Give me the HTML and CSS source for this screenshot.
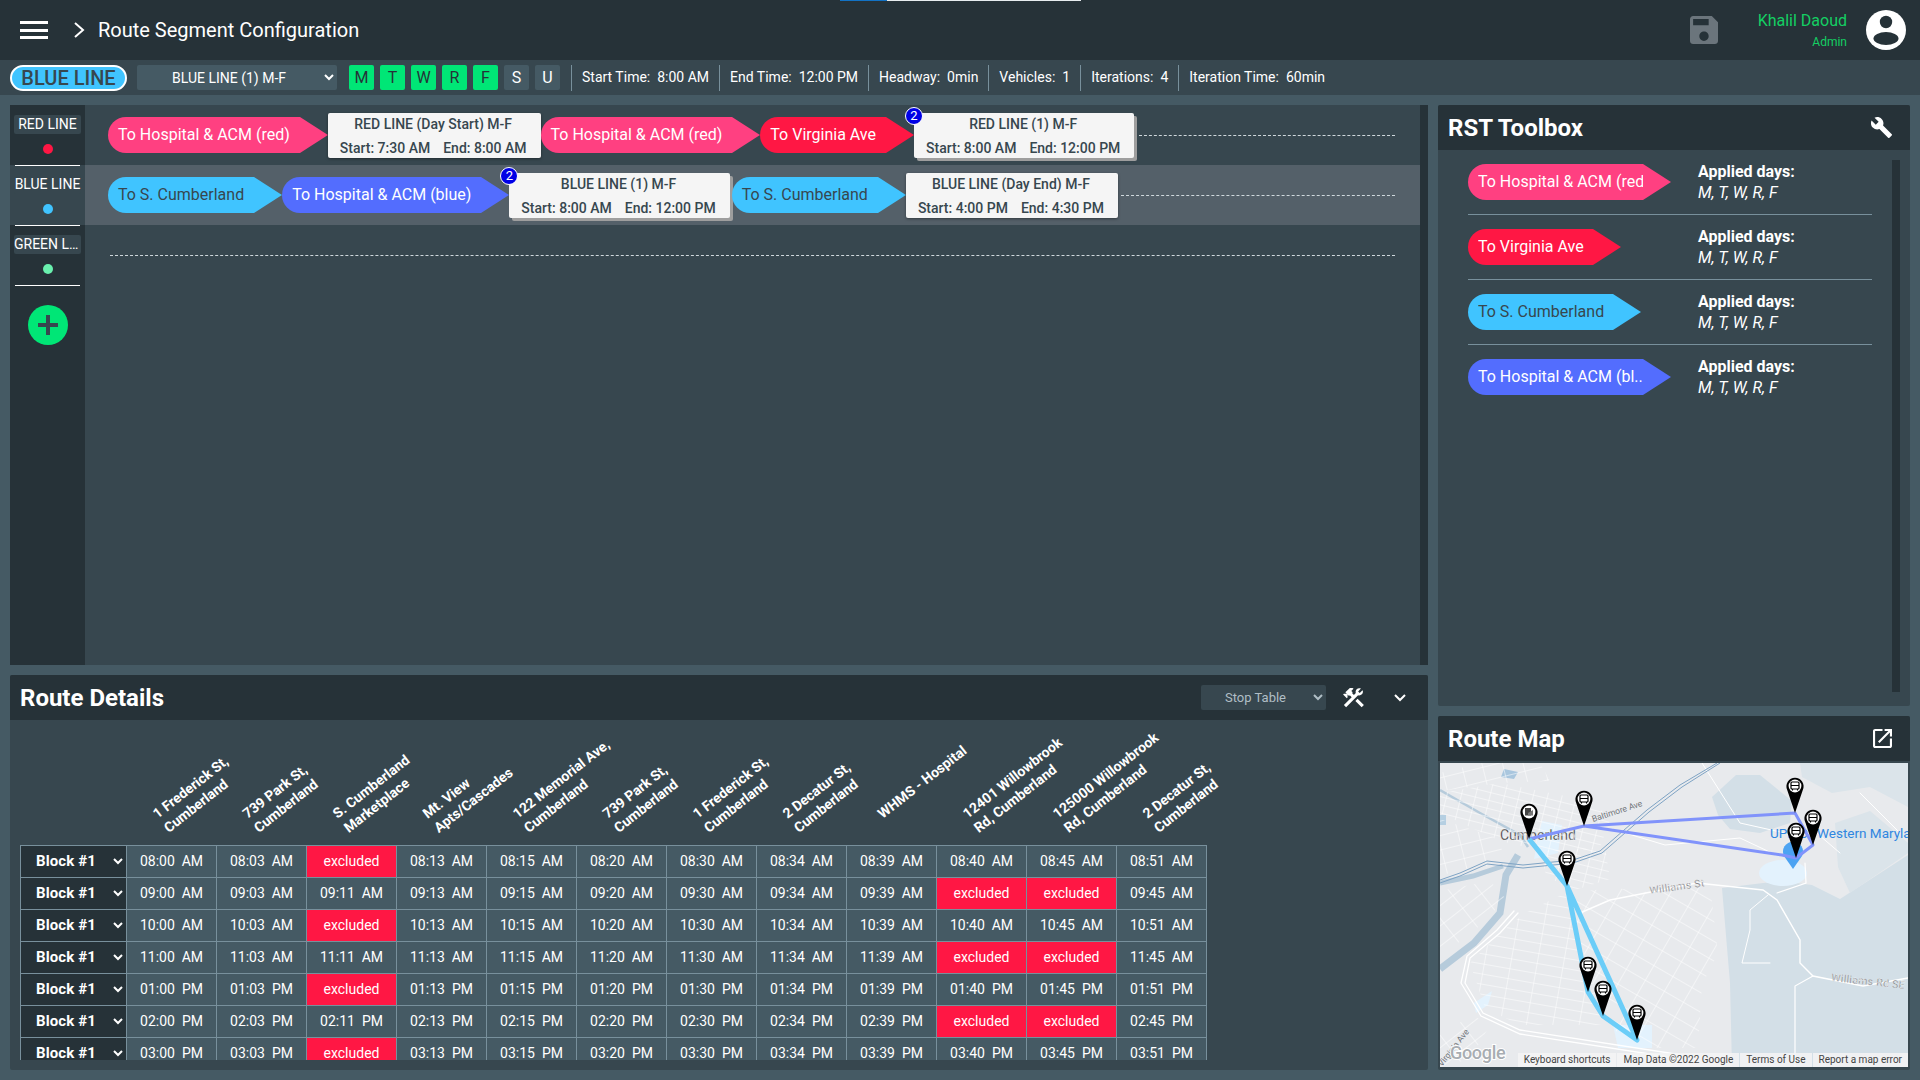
FILE: index.html
```html
<!DOCTYPE html>
<html lang="en">
<head>
<meta charset="UTF-8" />
<meta name="viewport" content="width=device-width, initial-scale=1" />
<title>Route Segment Configuration</title>
<link rel="stylesheet" href="styles.css">
</head>
<body>

<header class="topbar">
  <div class="progress"><span class="progressDone"></span><span class="progressRest"></span></div>
  <div class="burger"><span></span><span></span><span></span></div>
  <svg class="crumbIcon" viewBox="0 0 12 16"><path d="M2 1l8 7-8 7" fill="none" stroke="#fff" stroke-width="2"/></svg>
  <h1 class="pageTitle">Route Segment Configuration</h1>
  <svg class="saveIcon" viewBox="3 3 18 18"><path fill="#6b757c" d="M17 3H5c-1.11 0-2 .9-2 2v14c0 1.1.89 2 2 2h14c1.1 0 2-.9 2-2V7l-4-4zm-5 16c-1.66 0-3-1.34-3-3s1.34-3 3-3 3 1.34 3 3-1.34 3-3 3zm3-10H5V5h10v4z"/></svg>
  <div class="user">
    <div class="userName">Khalil Daoud</div>
    <div class="userRole">Admin</div>
  </div>
  <svg class="avatar" viewBox="0 0 40 40">
    <circle cx="20" cy="20" r="20" fill="#fff"/>
    <circle cx="20" cy="12" r="6.2" fill="#263238"/>
    <ellipse cx="20" cy="28.5" rx="12.5" ry="6.5" fill="#263238"/>
  </svg>
</header>

<div class="subbar">
  <div class="linePill">BLUE LINE</div>
  <select class="darkSelect scheduleSelect"><option>BLUE LINE (1) M-F</option></select>
  <div class="days">
    <span class="day on">M</span><span class="day on">T</span><span class="day on">W</span><span class="day on">R</span><span class="day on">F</span><span class="day">S</span><span class="day">U</span>
  </div>
  <div class="stat">Start Time:<b>8:00 AM</b></div>
  <div class="stat">End Time:<b>12:00 PM</b></div>
  <div class="stat">Headway:<b>0min</b></div>
  <div class="stat">Vehicles:<b>1</b></div>
  <div class="stat">Iterations:<b>4</b></div>
  <div class="stat">Iteration Time:<b>60min</b></div>
</div>

<main class="content">
  <div class="leftCol">

    <section class="board">
      <aside class="lineList">
        <div class="lineItem">
          <div class="lineName">RED LINE</div>
          <span class="lineDot dotRed"></span>
        </div>
        <div class="lineItem lineItemActive">
          <div class="lineName">BLUE LINE</div>
          <span class="lineDot dotBlue"></span>
        </div>
        <div class="lineItem">
          <div class="lineName">GREEN LINE</div>
          <span class="lineDot dotGreen"></span>
        </div>
        <div class="addLine"><span class="addLineH"></span><span class="addLineV"></span></div>
      </aside>

      <div class="tracks">
        <div class="track">
          <div class="chip pink"><span class="chipText">To Hospital &amp; ACM (red)</span></div>
          <div class="card">
            <div class="cardTitle">RED LINE (Day Start) M-F</div>
            <div class="cardTimes"><span>Start: 7:30 AM</span><span>End: 8:00 AM</span></div>
          </div>
          <div class="chip pink"><span class="chipText">To Hospital &amp; ACM (red)</span></div>
          <div class="chip red"><span class="chipText">To Virginia Ave</span></div>
          <div class="card cardStacked">
            <span class="badge">2</span>
            <div class="cardTitle">RED LINE (1) M-F</div>
            <div class="cardTimes"><span>Start: 8:00 AM</span><span>End: 12:00 PM</span></div>
          </div>
          <div class="dashLine"></div>
        </div>

        <div class="track trackActive">
          <div class="chip sky"><span class="chipText">To S. Cumberland</span></div>
          <div class="chip indigo"><span class="chipText">To Hospital &amp; ACM (blue)</span></div>
          <div class="card cardStacked">
            <span class="badge">2</span>
            <div class="cardTitle">BLUE LINE (1) M-F</div>
            <div class="cardTimes"><span>Start: 8:00 AM</span><span>End: 12:00 PM</span></div>
          </div>
          <div class="chip sky"><span class="chipText">To S. Cumberland</span></div>
          <div class="card">
            <div class="cardTitle">BLUE LINE (Day End) M-F</div>
            <div class="cardTimes"><span>Start: 4:00 PM</span><span>End: 4:30 PM</span></div>
          </div>
          <div class="dashLine"></div>
        </div>

        <div class="track trackEmpty">
          <div class="dashLine"></div>
        </div>
      </div>
      <div class="scrollTrack"></div>
    </section>

    <section class="panel details">
      <div class="panelHead">
        <h2 class="panelTitle">Route Details</h2>
        <select class="darkSelect viewSelect"><option>Stop Table</option></select>
        <svg class="toolsIcon" viewBox="2 3 20 19"><path fill="#fff" d="M13.78 15.3L19.78 21.3L21.89 19.14L15.89 13.14L13.78 15.3M17.5 10.1C17.11 10.1 16.69 10.05 16.36 9.91L4.97 21.25L2.86 19.14L10.27 11.74L8.5 9.96L7.78 10.66L6.33 9.25V12.11L5.63 12.81L2.11 9.25L2.81 8.55H5.62L4.22 7.14L7.78 3.58C8.95 2.41 10.83 2.41 12 3.58L9.89 5.74L11.3 7.14L10.59 7.85L12.38 9.63L14.2 7.75C14.06 7.42 14 7 14 6.63C14 4.66 15.55 3.11 17.5 3.11C18.09 3.11 18.61 3.25 19.08 3.53L16.41 6.2L17.91 7.7L20.58 5.03C20.86 5.5 21 6 21 6.63C21 8.55 19.45 10.1 17.5 10.1Z"/></svg>
        <svg class="collapseIcon" viewBox="0 0 12 8"><path d="M1 1l5 5 5-5" fill="none" stroke="#fff" stroke-width="2"/></svg>
      </div>
      <div class="tableWrap">
        <table class="stopTable">
          <thead>
            <tr>
              <th class="blockCol"></th>
              <th><span class="stopName">1 Frederick St,<br>Cumberland</span></th>
              <th><span class="stopName">739 Park St,<br>Cumberland</span></th>
              <th><span class="stopName">S. Cumberland<br>Marketplace</span></th>
              <th><span class="stopName">Mt. View<br>Apts/Cascades</span></th>
              <th><span class="stopName">122 Memorial Ave,<br>Cumberland</span></th>
              <th><span class="stopName">739 Park St,<br>Cumberland</span></th>
              <th><span class="stopName">1 Frederick St,<br>Cumberland</span></th>
              <th><span class="stopName">2 Decatur St,<br>Cumberland</span></th>
              <th><span class="stopName stopNameOne">WHMS - Hospital</span></th>
              <th><span class="stopName">12401 Willowbrook<br>Rd, Cumberland</span></th>
              <th><span class="stopName">125000 Willowbrook<br>Rd, Cumberland</span></th>
              <th><span class="stopName">2 Decatur St,<br>Cumberland</span></th>
            </tr>
          </thead>
          <tbody>
            <tr>
              <td class="blockCell"><select class="blockSelect"><option>Block #1</option></select></td>
              <td>08:00 AM</td><td>08:03 AM</td><td class="excluded">excluded</td><td>08:13 AM</td><td>08:15 AM</td><td>08:20 AM</td><td>08:30 AM</td><td>08:34 AM</td><td>08:39 AM</td><td>08:40 AM</td><td>08:45 AM</td><td>08:51 AM</td>
            </tr>
            <tr>
              <td class="blockCell"><select class="blockSelect"><option>Block #1</option></select></td>
              <td>09:00 AM</td><td>09:03 AM</td><td>09:11 AM</td><td>09:13 AM</td><td>09:15 AM</td><td>09:20 AM</td><td>09:30 AM</td><td>09:34 AM</td><td>09:39 AM</td><td class="excluded">excluded</td><td class="excluded">excluded</td><td>09:45 AM</td>
            </tr>
            <tr>
              <td class="blockCell"><select class="blockSelect"><option>Block #1</option></select></td>
              <td>10:00 AM</td><td>10:03 AM</td><td class="excluded">excluded</td><td>10:13 AM</td><td>10:15 AM</td><td>10:20 AM</td><td>10:30 AM</td><td>10:34 AM</td><td>10:39 AM</td><td>10:40 AM</td><td>10:45 AM</td><td>10:51 AM</td>
            </tr>
            <tr>
              <td class="blockCell"><select class="blockSelect"><option>Block #1</option></select></td>
              <td>11:00 AM</td><td>11:03 AM</td><td>11:11 AM</td><td>11:13 AM</td><td>11:15 AM</td><td>11:20 AM</td><td>11:30 AM</td><td>11:34 AM</td><td>11:39 AM</td><td class="excluded">excluded</td><td class="excluded">excluded</td><td>11:45 AM</td>
            </tr>
            <tr>
              <td class="blockCell"><select class="blockSelect"><option>Block #1</option></select></td>
              <td>01:00 PM</td><td>01:03 PM</td><td class="excluded">excluded</td><td>01:13 PM</td><td>01:15 PM</td><td>01:20 PM</td><td>01:30 PM</td><td>01:34 PM</td><td>01:39 PM</td><td>01:40 PM</td><td>01:45 PM</td><td>01:51 PM</td>
            </tr>
            <tr>
              <td class="blockCell"><select class="blockSelect"><option>Block #1</option></select></td>
              <td>02:00 PM</td><td>02:03 PM</td><td>02:11 PM</td><td>02:13 PM</td><td>02:15 PM</td><td>02:20 PM</td><td>02:30 PM</td><td>02:34 PM</td><td>02:39 PM</td><td class="excluded">excluded</td><td class="excluded">excluded</td><td>02:45 PM</td>
            </tr>
            <tr>
              <td class="blockCell"><select class="blockSelect"><option>Block #1</option></select></td>
              <td>03:00 PM</td><td>03:03 PM</td><td class="excluded">excluded</td><td>03:13 PM</td><td>03:15 PM</td><td>03:20 PM</td><td>03:30 PM</td><td>03:34 PM</td><td>03:39 PM</td><td>03:40 PM</td><td>03:45 PM</td><td>03:51 PM</td>
            </tr>
          </tbody>
        </table>
      </div>
    </section>
  </div>

  <div class="rightCol">
    <section class="panel toolbox">
      <div class="panelHead">
        <h2 class="panelTitle">RST Toolbox</h2>
        <svg class="panelIcon wrench" viewBox="1 1 23 23"><path fill="#fff" d="M22.7 19l-9.1-9.1c.9-2.3.4-5-1.5-6.9-2-2-5-2.4-7.4-1.3L9 6 6 9 1.6 4.7C.4 7.1.9 10.1 2.9 12.1c1.9 1.9 4.6 2.4 6.9 1.5l9.1 9.1c.4.4 1 .4 1.4 0l2.3-2.3c.5-.4.5-1.1.1-1.4z"/></svg>
      </div>
      <div class="toolBody">
        <div class="toolList">
          <div class="toolRow">
            <div class="chip pink toolChip wide"><span class="chipText">To Hospital &amp; ACM (red)</span></div>
            <div class="applied"><b>Applied days:</b><i>M, T, W, R, F</i></div>
          </div>
          <div class="toolRow">
            <div class="chip red toolChip short"><span class="chipText">To Virginia Ave</span></div>
            <div class="applied"><b>Applied days:</b><i>M, T, W, R, F</i></div>
          </div>
          <div class="toolRow">
            <div class="chip sky toolChip mid"><span class="chipText">To S. Cumberland</span></div>
            <div class="applied"><b>Applied days:</b><i>M, T, W, R, F</i></div>
          </div>
          <div class="toolRow toolRowLast">
            <div class="chip indigo toolChip wide"><span class="chipText">To Hospital &amp; ACM (bl..</span></div>
            <div class="applied"><b>Applied days:</b><i>M, T, W, R, F</i></div>
          </div>
        </div>
        <div class="toolScroll"></div>
      </div>
    </section>

    <section class="panel routeMap">
      <div class="panelHead mapHead">
        <h2 class="panelTitle">Route Map</h2>
        <svg class="panelIcon openIcon" viewBox="3 3 18 18"><path fill="#fff" d="M19 19H5V5h7V3H5c-1.11 0-2 .9-2 2v14c0 1.1.89 2 2 2h14c1.1 0 2-.9 2-2v-7h-2v7zM14 3v2h3.59l-9.83 9.83 1.41 1.41L19 6.41V10h2V3h-7z"/></svg>
      </div>
      <div class="mapBox">
        <svg class="mapSvg" viewBox="0 0 468 304">
          <defs>
            <pattern id="streetsDense" width="14" height="8" patternUnits="userSpaceOnUse" patternTransform="rotate(14)">
              <path d="M0 0H14M0 0V8" stroke="#fff" stroke-width="1" fill="none"/>
            </pattern>
            <pattern id="streetsWest" width="20" height="14" patternUnits="userSpaceOnUse" patternTransform="rotate(-14)">
              <path d="M0 0H20M0 0V14" stroke="#fff" stroke-width="1" fill="none"/>
            </pattern>
            <pattern id="streetsSouth" width="26" height="10" patternUnits="userSpaceOnUse" patternTransform="rotate(10)">
              <path d="M0 0H26M0 0V10" stroke="#fff" stroke-width="1" fill="none"/>
            </pattern>
            <pattern id="streetsEast" width="22" height="17" patternUnits="userSpaceOnUse" patternTransform="rotate(30)">
              <path d="M0 0H22M0 0V17" stroke="#fff" stroke-width="1" fill="none"/>
            </pattern>
            <pattern id="streetsRiver" width="24" height="16" patternUnits="userSpaceOnUse" patternTransform="rotate(-38)">
              <path d="M0 0H24M0 0V16" stroke="#fff" stroke-width="1" fill="none"/>
            </pattern>
            <g id="pinBody">
              <path d="M0 0L-7.8 -23A8.6 8.6 0 1 1 7.8 -23Z" fill="#000"/>
              <circle cx="0" cy="-27" r="6.4" fill="#fff"/>
            </g>
            <g id="pin">
              <use href="#pinBody"/>
              <rect x="-4" y="-31" width="8" height="7" rx="1" fill="none" stroke="#000" stroke-width="1.2"/>
              <path d="M-4 -27.5H4M-2.5 -24V-22.5M2.5 -24V-22.5" stroke="#000" stroke-width="1.1"/>
            </g>
            <g id="pinAlt">
              <use href="#pinBody"/>
              <rect x="-4" y="-31" width="6" height="7.5" fill="#444"/>
              <path d="M-1 -26L4 -29V-23.5H-1Z" fill="#777"/>
            </g>
          </defs>

          <rect width="468" height="304" fill="#e8eaed"/>

          <!-- terrain -->
          <path fill="#d3dfe7" d="M282 125L340 118L372 122L400 136L468 92V304H292L290 220Z"/>
          <path fill="#d3dfe7" d="M272 34L296 12L320 12L352 38L350 60L320 70L290 66L278 52Z"/>
          <path fill="#dbe4ea" d="M360 0H468V44L430 24L392 30L362 14Z"/>
          <path fill="#dbe4ea" d="M395 60L430 48L468 80V90L410 130L398 104Z"/>

          <!-- water -->
          <path fill="none" stroke="#b6cbdb" stroke-width="7" d="M0 206L34 180L60 150L66 112L78 92"/>
          <path fill="none" stroke="#b6cbdb" stroke-width="2.5" d="M0 27L40 50L80 72L88 84"/>
          <path fill="none" stroke="#b6cbdb" stroke-width="5" d="M0 120L33 113L63 103"/>
          <path fill="#a9c6de" d="M64 6L78 9L74 16L61 14Z"/>
          <rect x="0" y="52" width="6" height="10" fill="#b5cfe2"/>
          <ellipse cx="343" cy="110" rx="24" ry="13" fill="#e3f2fd"/>
          <path fill="#e3f2fd" d="M173 262H212V285H178Z"/>
          <path fill="#e3f2fd" d="M102 58L122 62L118 90L94 96L98 74Z"/>
          <path fill="#e3f2fd" d="M34 240L52 228L48 242L36 250Z"/>

          <!-- streets -->
          <path fill="url(#streetsWest)" d="M0 10L40 0H100L110 18L60 20L0 28Z"/>
          <path fill="url(#streetsDense)" d="M0 30L60 20L130 34L172 52L160 84L120 92L60 78L0 50Z"/>
          <path fill="url(#streetsDense)" d="M100 88L165 84L170 116L132 128L106 112Z"/>
          <path fill="url(#streetsWest)" d="M0 56L60 76L64 100L0 112Z"/>
          <path fill="url(#streetsSouth)" d="M30 200L60 170L85 150L125 130L150 210L165 262L80 262L45 245Z"/>
          <path fill="url(#streetsEast)" d="M125 130L175 125L215 130L270 122L278 190L262 222L258 285L205 285L165 262L150 210Z"/>
          <path fill="url(#streetsRiver)" d="M0 128L50 118L66 136L30 172L0 192Z"/>
          <path fill="url(#streetsRiver)" d="M0 272L32 252L50 262L30 296L0 304Z"/>

          <!-- main roads -->
          <g fill="none" stroke="#fff" stroke-linecap="round">
            <path stroke-width="1.3" d="M242 292L80 267L43 250L25 220L30 195L60 170L78 150"/>
            <path stroke-width="1.3" d="M242 296L80 271L41 253L21 220L27 193L57 167L74 148"/>
            <path stroke-width="1.4" d="M140 150L170 137L257 120L323 127L337 137L360 177L360 200L373 213L423 223L468 215"/>
            <path stroke-width="1.2" d="M373 213L355 223L355 304"/>
            <path stroke-width="1.2" d="M337 130L366 120L365 100"/>
            <path stroke-width="1" d="M328 132L310 147L310 167L302 200H330"/>
            <path stroke-width="1" d="M172 66L225 82L300 75L336 92"/>
            <path stroke-width="1" d="M262 0L300 60L345 70M365 60L400 90M420 30L460 70"/>
          </g>

          <!-- rail -->
          <path fill="none" stroke="#7ea3c4" stroke-width="1" d="M0 117L20 110L47 98L83 102L133 97L160 88L207 47L240 22L277 0"/>
          <path fill="none" stroke="#7ea3c4" stroke-width="1" d="M0 120L20 113L47 101L83 105L133 100L162 90L209 49L242 24L280 0"/>

          <text class="mapLabel" x="60" y="77">Cumberland</text>
          <text class="poiLabel" y="75"><tspan x="330">UPMC</tspan><tspan x="377">Western Maryland</tspan></text>
          <text class="roadLabel" transform="translate(210 131) rotate(-8)">Williams St</text>
          <text class="roadLabel" transform="translate(391 218) rotate(6)">Williams Rd SE</text>
          <text class="roadLabelSmall" transform="translate(153 59) rotate(-18)">Baltimore Ave</text>
          <text class="roadLabelSmall" transform="translate(2 304) rotate(-52)">Virginia Ave</text>

          <!-- poi marker -->
          <path fill="#4ca3f2" d="M353 106L344 93A10 10 0 1 1 362 93Z"/>

          <!-- routes -->
          <path fill="none" stroke="#8093fb" stroke-width="3" stroke-linejoin="round" d="M89 76L144 63L355 50L373 82L356 95L342 92L144 63"/>
          <path fill="none" stroke="#6bcdf8" stroke-width="5" stroke-linejoin="round" d="M89 76L127 123L148 229L163 253L197 277L127 123"/>

          <use href="#pinAlt" x="89" y="76"/>
          <use href="#pin" x="144" y="63"/>
          <use href="#pin" x="355" y="50"/>
          <use href="#pin" x="373" y="82"/>
          <use href="#pin" x="356" y="95"/>
          <use href="#pin" x="127" y="123"/>
          <use href="#pin" x="148" y="229"/>
          <use href="#pin" x="163" y="253"/>
          <use href="#pin" x="197" y="277"/>

          <text class="googleMark" x="10" y="296">Google</text>
        </svg>
        <div class="mapCredits">
          <span>Keyboard shortcuts</span>
          <span>Map Data ©2022 Google</span>
          <span>Terms of Use</span>
          <span>Report a map error</span>
        </div>
      </div>
    </section>
  </div>
</main>

</body>
</html>
```

FILE: styles.css
```css
* { box-sizing: border-box; }

html, body { height: 100%; }

body {
  margin: 0;
  height: 100vh;
  overflow: hidden;
  display: flex;
  flex-direction: column;
  font-family: Roboto, "Liberation Sans", sans-serif;
  font-size: 14px;
  color: #fff;
  background: #455a64;
}

/* top bar */
.topbar {
  position: relative;
  height: 60px;
  flex: none;
  display: flex;
  align-items: center;
  padding: 0 14px 0 20px;
  background: #263238;
}
.progress {
  position: absolute;
  top: 0;
  left: 840px;
  display: flex;
  height: 1px;
}
.progressDone { width: 47px; background: #1272c4; }
.progressRest { width: 194px; background: #e8edf0; }

.burger { width: 28px; display: flex; flex-direction: column; gap: 4.5px; }
.burger span { height: 3px; background: #fff; }

.crumbIcon { width: 12px; height: 16px; margin-left: 25px; }
.pageTitle { margin: 0 auto 0 13px; font-size: 20px; font-weight: 400; }

.saveIcon { width: 28px; height: 28px; }
.user { width: 129px; padding-bottom: 1px; text-align: right; color: #14cf63; }
.userName { font-size: 16px; line-height: 20px; }
.userRole { font-size: 12px; line-height: 14px; margin-top: 4px; }
.avatar { width: 40px; height: 40px; margin-left: 19px; }

/* sub bar */
.subbar {
  height: 35px;
  flex: none;
  display: flex;
  align-items: flex-start;
  padding: 5px 0 0 10px;
  background: #37474f;
}
.linePill {
  width: 117px;
  height: 26px;
  border: 2px solid #fff;
  border-radius: 13px;
  background: #40c4ff;
  color: #37474f;
  font-size: 20px;
  font-weight: 500;
  line-height: 23px;
  text-align: center;
}
.darkSelect {
  height: 25px;
  border: 0;
  border-radius: 2px;
  font-family: inherit;
  font-size: 14px;
}
.scheduleSelect {
  width: 200px;
  margin-left: 10px;
  padding-left: 31px;
  background: #455a64;
  color: #fff;
}
.days { display: flex; gap: 6px; margin-left: 12px; padding-right: 11px; border-right: 1px solid #78909c; height: 26px; }
.day {
  width: 25px;
  height: 25px;
  border-radius: 2px;
  background: #455a64;
  font-size: 16px;
  line-height: 25px;
  text-align: center;
}
.day.on { background: #00e676; color: #263238; }
.stat {
  height: 26px;
  padding: 0 10px;
  border-right: 1px solid #78909c;
  line-height: 25px;
}
.stat:last-child { border-right: 0; }
.stat b { margin-left: 7px; font-weight: 400; }

/* page columns */
.content {
  flex: 1;
  min-height: 0;
  display: flex;
  gap: 10px;
  padding: 10px;
}
.leftCol { width: 1418px; display: flex; flex-direction: column; gap: 10px; }
.rightCol { width: 472px; display: flex; flex-direction: column; gap: 10px; }

/* route board */
.board { height: 560px; flex: none; display: flex; background: #37474f; }

.lineList { width: 75px; flex: none; background: #263238; }
.lineItem {
  height: 60px;
  margin: 0;
  padding: 10px 4px 0;
  display: flex;
  flex-direction: column;
  align-items: center;
  position: relative;
}
.lineItem::after {
  content: "";
  position: absolute;
  z-index: 1;
  left: 5px;
  right: 5px;
  bottom: -1px;
  height: 1px;
  background: #fff;
}
.lineItemActive { background: #37474f; }
.lineName {
  width: 67px;
  height: 19px;
  border-radius: 2px;
  background: #37474f;
  font-size: 14px;
  line-height: 19px;
  text-align: center;
  white-space: nowrap;
  overflow: hidden;
  text-overflow: ellipsis;
}
.lineDot { width: 10px; height: 10px; margin-top: 10px; border-radius: 50%; }
.dotRed { background: #ff1744; }
.dotBlue { background: #40c4ff; }
.dotGreen { background: #69f0ae; }

.addLine {
  position: relative;
  width: 40px;
  height: 40px;
  margin: 20px auto 0;
  border-radius: 50%;
  background: #00e676;
}
.addLineH, .addLineV { position: absolute; background: #37474f; }
.addLineH { left: 10px; top: 18px; width: 20px; height: 4px; }
.addLineV { left: 18px; top: 10px; width: 4px; height: 20px; }

.tracks { flex: 1; min-width: 0; }
.track {
  height: 60px;
  display: flex;
  align-items: center;
  padding: 0 25px 0 23px;
}
.trackActive { background: #546069; }
.trackEmpty { padding-left: 22px; }
.dashLine { flex: 1; margin-left: 3px; border-top: 1px dashed #cfd8dc; }
.scrollTrack { width: 8px; flex: none; background: #263238; }

/* segment chips */
.chip {
  position: relative;
  flex: none;
  height: 36px;
  margin-right: 28px;
  padding: 0 10px;
  border-radius: 18px 0 0 18px;
  font-size: 16px;
  line-height: 36px;
  white-space: nowrap;
}
.chip::after {
  content: "";
  position: absolute;
  top: 0;
  left: 100%;
  border-top: 18px solid transparent;
  border-bottom: 18px solid transparent;
  border-left: 28px solid;
}
.pink { background: #ff4081; }
.pink::after { border-left-color: #ff4081; }
.red { background: #ff1744; }
.red::after { border-left-color: #ff1744; }
.sky { background: #40c4ff; color: #37474f; }
.sky::after { border-left-color: #40c4ff; }
.indigo { background: #536dfe; }
.indigo::after { border-left-color: #536dfe; }

/* stop cards */
.card {
  position: relative;
  flex: none;
  height: 45px;
  padding: 2px 14px 0 12px;
  border-radius: 2px;
  background: #f5f5f5;
  color: #37474f;
  font-weight: 500;
  text-align: center;
  box-shadow: 0 1px 3px rgba(0, 0, 0, 0.4);
}
.cardStacked { box-shadow: 3px 3px 0 #9e9e9e; margin-right: 2px; }
.cardTitle { line-height: 18px; white-space: nowrap; }
.cardTimes { display: flex; gap: 13px; margin-top: 6px; line-height: 18px; white-space: nowrap; }
.badge {
  position: absolute;
  top: -6px;
  left: -9px;
  width: 18px;
  height: 18px;
  border: 1.5px solid #fff;
  border-radius: 50%;
  background: #0000e6;
  color: #fff;
  font-size: 13px;
  font-weight: 400;
  line-height: 15px;
}

/* panels */
.panel { border-radius: 2px; background: #37474f; }
.panelHead {
  height: 45px;
  display: flex;
  align-items: center;
  padding: 0 10px;
  border-radius: 2px 2px 0 0;
  background: #263238;
}
.panelTitle { margin: 0 auto 0 0; font-size: 24px; font-weight: 700; }
.panelIcon { display: block; }

/* route details */
.details { flex: 1; min-height: 0; display: flex; flex-direction: column; }
.viewSelect {
  width: 125px;
  padding-left: 20px;
  background: #37474f;
  color: #b0bec5;
  font-size: 13px;
}
.toolsIcon { width: 21px; height: 20px; margin-left: 17px; }
.collapseIcon { width: 12px; height: 8px; margin-left: 30px; margin-right: 12px; }
.tableWrap { height: 340px; margin-left: 10px; overflow: hidden; }
.stopTable {
  width: 1186px;
  table-layout: fixed;
  border-collapse: collapse;
}
.stopTable th {
  position: relative;
  width: 90px;
  height: 125px;
  padding: 0;
}
.stopTable th.blockCol { width: 106px; }
.stopName {
  position: absolute;
  top: 88px;
  left: 22px;
  font-size: 14px;
  font-weight: 700;
  line-height: 18px;
  text-align: left;
  white-space: nowrap;
  transform-origin: 0 0;
  transform: rotate(-38deg);
}
.stopNameOne { left: 27px; }
.stopTable td {
  height: 32px;
  padding: 0;
  border: 1px solid #78909c;
  background: #455a64;
  font-size: 14px;
  text-align: center;
  word-spacing: 3.5px;
}
.stopTable td.excluded { background: #ff1744; word-spacing: 0; }
.stopTable td.blockCell { background: #263238; }
.blockSelect {
  display: block;
  width: 100%;
  height: 30px;
  padding-left: 11px;
  border: 0;
  background: #263238;
  color: #fff;
  font-family: inherit;
  font-size: 15px;
  font-weight: 700;
  letter-spacing: 0.1px;
}

/* toolbox */
.toolbox { height: 601px; flex: none; display: flex; flex-direction: column; }
.wrench { width: 22px; height: 22px; margin-right: 7px; }
.toolBody { flex: 1; display: flex; padding: 10px 10px 14px 30px; }
.toolList { width: 404px; margin-top: -10px; }
.toolRow {
  position: relative;
  height: 65px;
  display: flex;
  padding-top: 14px;
  border-bottom: 1px solid #78909c;
}
.toolRowLast { border-bottom: 0; }
.toolScroll { width: 8px; margin-left: auto; background: #263238; }
.toolChip { padding-right: 0; }
.toolChip .chipText { display: block; overflow: hidden; }
.toolChip.wide { width: 175px; }
.toolChip.short { width: 125px; }
.toolChip.mid { width: 145px; }
.applied { position: absolute; left: 230px; top: 11px; display: flex; flex-direction: column; font-size: 16px; line-height: 21px; }
.applied b { font-weight: 700; }

/* route map */
.routeMap { flex: 1; min-height: 0; padding-bottom: 3px; display: flex; flex-direction: column; }
.mapHead { flex: none; }
.openIcon { width: 19px; height: 19px; margin-right: 8px; }
.mapBox {
  position: relative;
  flex: 1;
  margin: 2px 2px 0;
  overflow: hidden;
}
.mapSvg { display: block; width: 468px; height: 304px; }
.mapLabel { font-size: 14px; fill: #222; stroke: #fff; stroke-width: 0.3px; }
.poiLabel { font-size: 13.5px; fill: #2f86e0; }
.roadLabel { font-size: 10.5px; fill: #5f6368; stroke: #fff; stroke-width: 0.3px; letter-spacing: 0.3px; }
.roadLabelSmall { font-size: 8.5px; fill: #70757a; }
.googleMark { font-size: 18px; font-weight: 500; fill: #a8adb2; stroke: #fff; stroke-width: 2px; paint-order: stroke; letter-spacing: -0.3px; }
.mapCredits {
  position: absolute;
  right: 0;
  bottom: 0;
  display: flex;
  gap: 1px;
  height: 14px;
  color: #444;
  font-size: 10px;
  line-height: 14px;
}
.mapCredits span { padding: 0 6px; background: rgba(245, 245, 245, 0.85); white-space: nowrap; }
```
